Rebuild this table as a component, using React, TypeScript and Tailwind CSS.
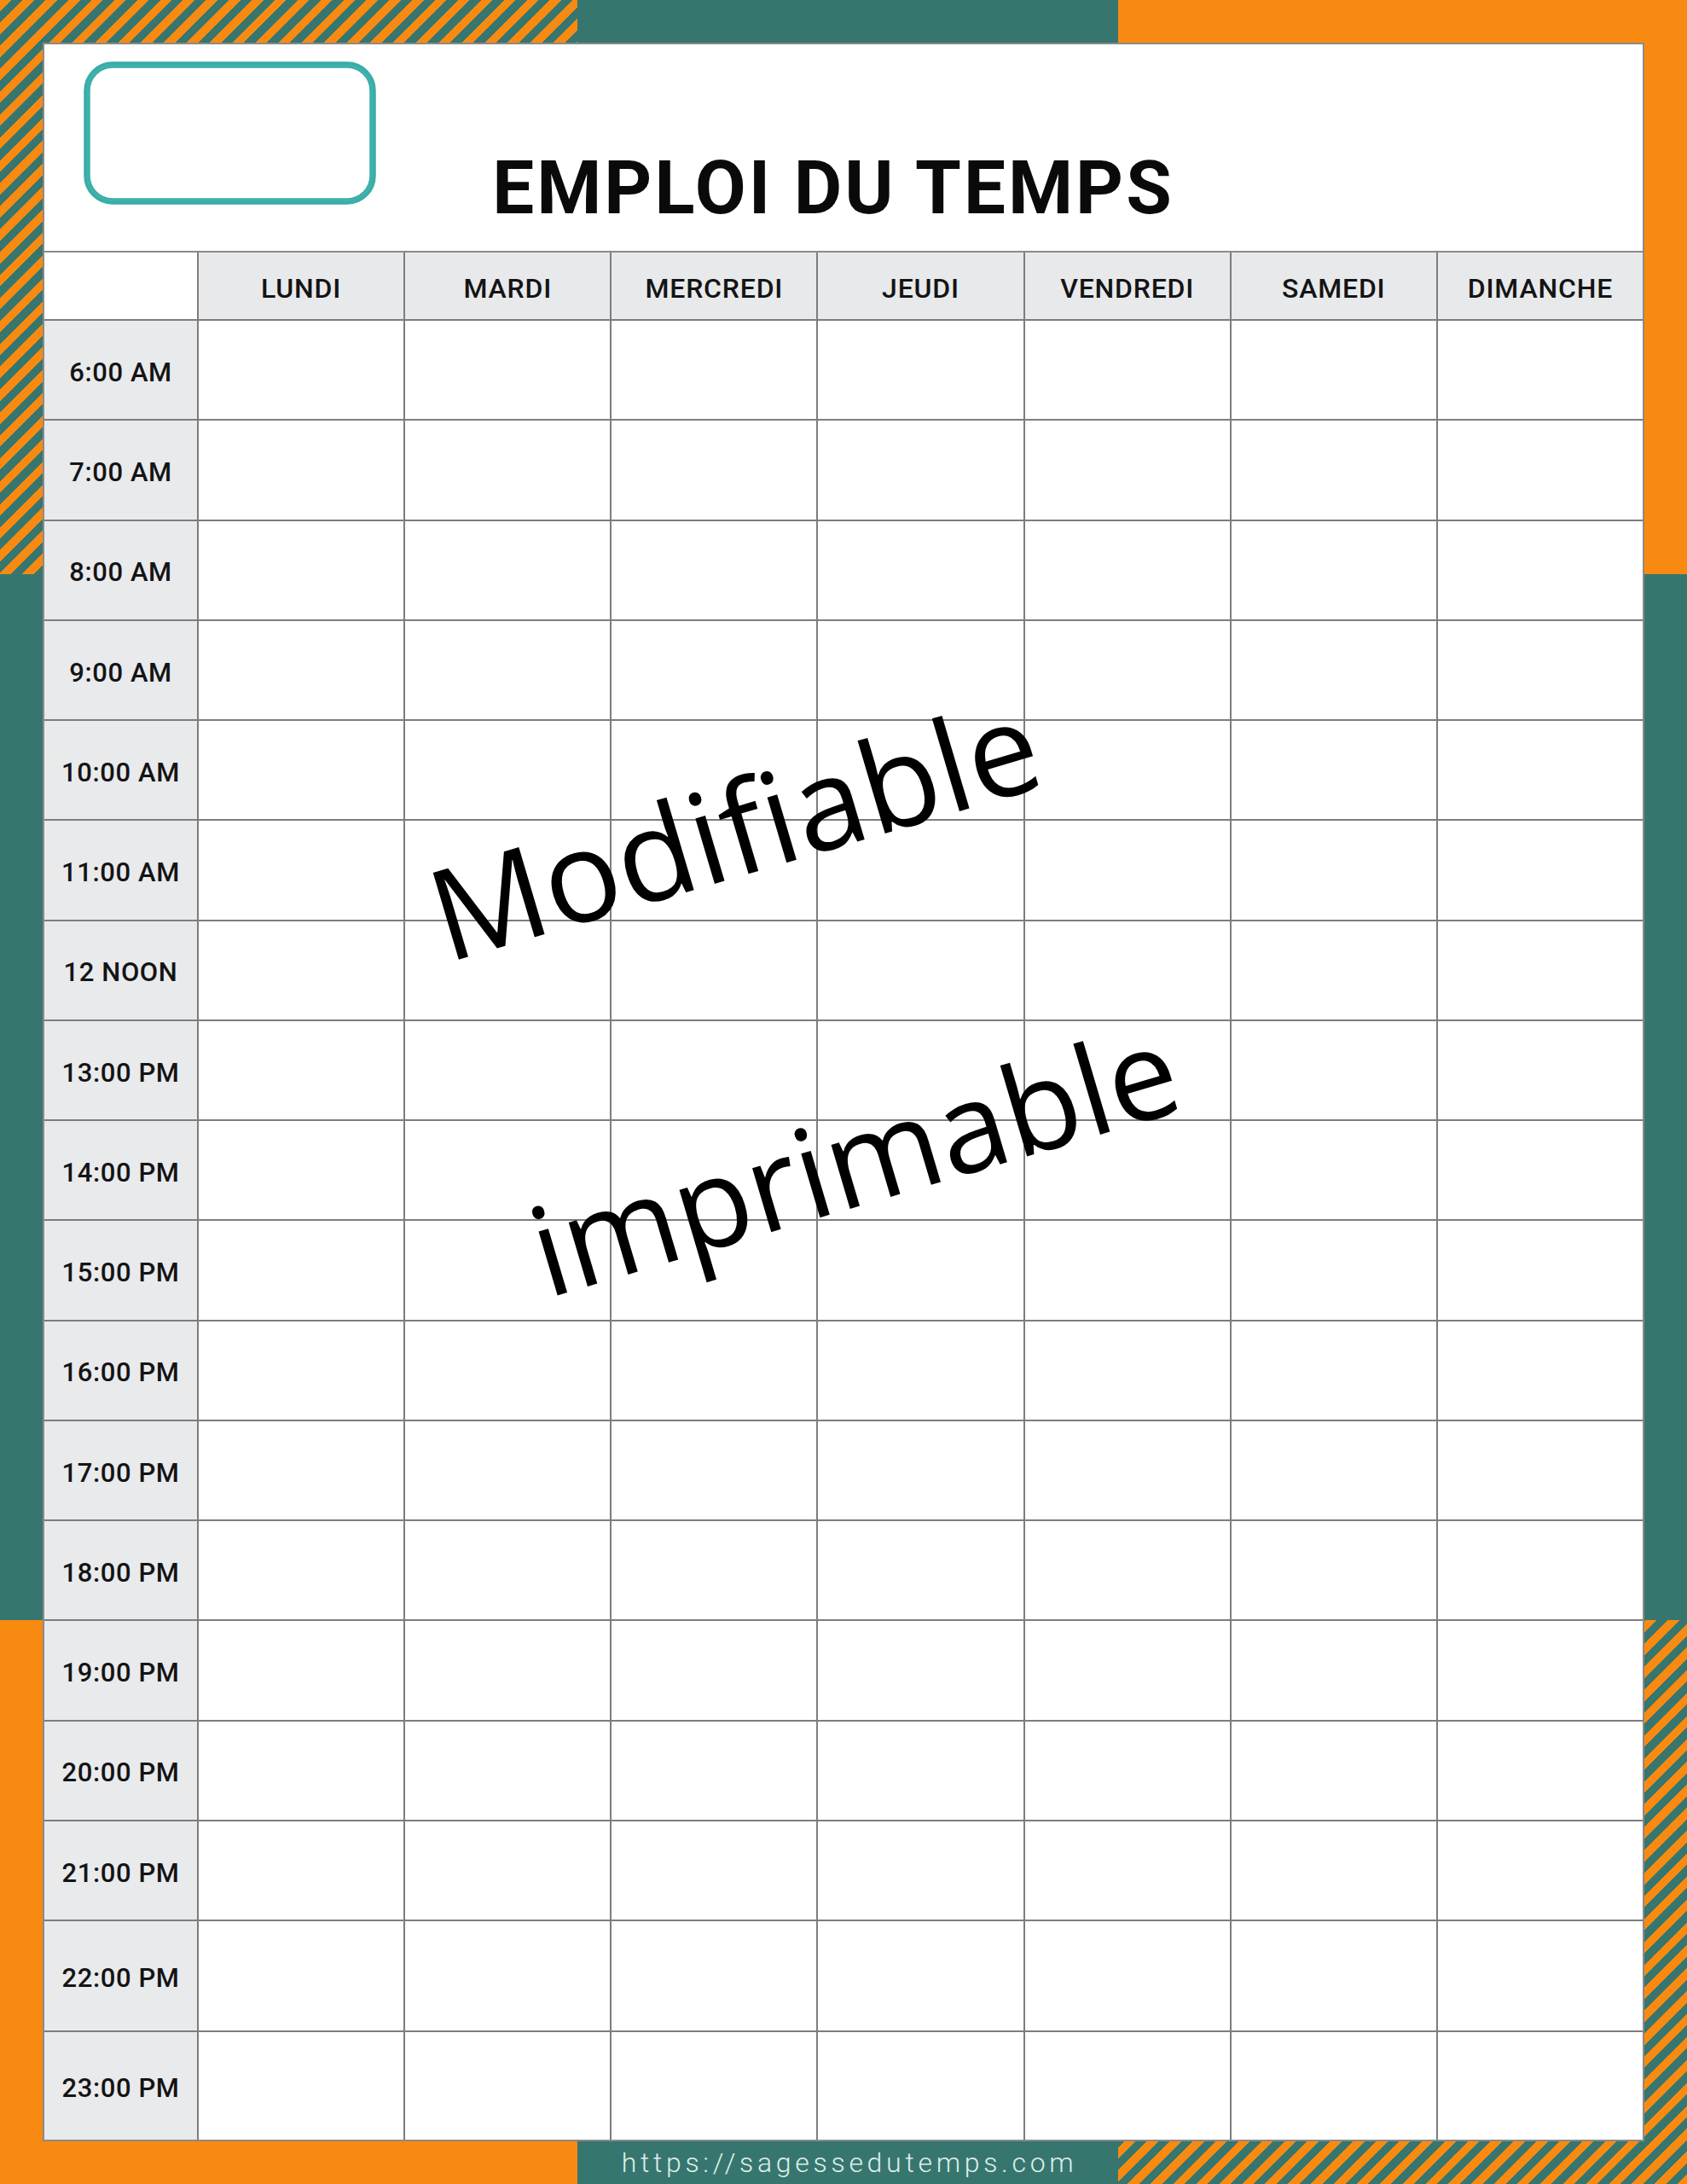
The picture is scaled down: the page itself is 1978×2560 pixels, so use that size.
import React from "react";

const DAYS = ["LUNDI", "MARDI", "MERCREDI", "JEUDI", "VENDREDI", "SAMEDI", "DIMANCHE"];
const TIMES = [
  "6:00 AM",
  "7:00 AM",
  "8:00 AM",
  "9:00 AM",
  "10:00 AM",
  "11:00 AM",
  "12 NOON",
  "13:00 PM",
  "14:00 PM",
  "15:00 PM",
  "16:00 PM",
  "17:00 PM",
  "18:00 PM",
  "19:00 PM",
  "20:00 PM",
  "21:00 PM",
  "22:00 PM",
  "23:00 PM",
];

function Stripes() {
  return (
    <div className="h-full w-full bg-[image:repeating-linear-gradient(135deg,#f98a11_0px,#f98a11_9.5px,#37766f_9.5px,#37766f_19px)]" />
  );
}

function LogoFrame() {
  return (
    <svg width="345" height="170" viewBox="0 0 345 170" fill="none">
      <rect x="5" y="5" width="335" height="160" rx="30" stroke="#3aaca8" strokeWidth="7.5" />
      <rect x="6" y="6" width="333" height="158" rx="29" stroke="#45b5b0" strokeWidth="3" opacity="0.6" />
    </svg>
  );
}

export default function App() {
  return (
    <div className="relative h-[2560px] w-[1978px] overflow-hidden bg-[#37766f] font-['Roboto',sans-serif]">
      {/* decorative background corners */}
      <div className="absolute inset-0 grid grid-cols-[677px_634px_667px] grid-rows-[673px_1226px_661px]">
        <Stripes />
        <div />
        <div className="bg-[#f98a11]" />
        <div />
        <div />
        <div />
        <div className="bg-[#f98a11]" />
        <div />
        <Stripes />
      </div>

      <div className="relative flex h-full flex-col px-[50px] pt-[50px]">
        {/* card */}
        <div className="flex h-[2460px] flex-col border-2 border-[#8a8a8a] bg-white">
          {/* header */}
          <div className="grid h-[242px] grid-cols-[1fr_auto_1fr]">
            <div className="pl-[45px] pt-[19px]">
              <LogoFrame />
            </div>
            <div className="flex items-end pb-[30px] pr-[24px]">
              <h1 className="font-['Roboto',sans-serif] text-[87px] font-bold leading-none tracking-[3px] text-[#0a0a0a]">
                EMPLOI DU TEMPS
              </h1>
            </div>
            <div />
          </div>

          {/* table */}
          <div className="grid flex-1 grid-cols-[179px_repeat(7,minmax(0,1fr))] grid-rows-[78px_repeat(16,115.25px)_127.5px_1fr] gap-[2px] border-t-2 border-[#8a8a8a] bg-[#7d7d7d]">
            <div className="bg-white" />
            {DAYS.map((d) => (
              <div
                key={d}
                className="flex items-center justify-center bg-[#e8e9eb] pt-[5px] text-[32px] font-medium tracking-[0.8px] text-[#141414]"
              >
                {d}
              </div>
            ))}
            {TIMES.map((t) => (
              <React.Fragment key={t}>
                <div className="flex items-center justify-center bg-[#e9eaec] pt-[7px] text-[31px] font-medium tracking-[0.6px] text-[#141414]">
                  {t}
                </div>
                {DAYS.map((d) => (
                  <div key={d} className="bg-white" />
                ))}
              </React.Fragment>
            ))}
          </div>
        </div>

        {/* footer url */}
        <div className="flex flex-1 items-center justify-center pl-[14px]">
          <span className="font-['Roboto',sans-serif] text-[32px] font-light leading-none tracking-[4.7px] text-[#dcefe9]">
            https://sagessedutemps.com
          </span>
        </div>
      </div>

      {/* watermark overlay */}
      <div className="pointer-events-none absolute left-[524px] top-[997px] origin-[0_132px] rotate-[-16.5deg] whitespace-nowrap font-['Open_Sans',sans-serif] text-[149px] leading-none text-black">
        Modifiable
      </div>
      <div className="pointer-events-none absolute left-[642px] top-[1393px] origin-[0_130px] rotate-[-16.5deg] whitespace-nowrap font-['Open_Sans',sans-serif] text-[146px] leading-none text-black">
        imprimable
      </div>
    </div>
  );
}
